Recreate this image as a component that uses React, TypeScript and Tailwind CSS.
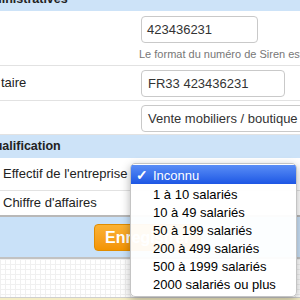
import React from 'react';

const options = [
  '1 à 10 salariés',
  '10 à 49 salariés',
  '50 à 199 salariés',
  '200 à 499 salariés',
  '500 à 1999 salariés',
  '2000 salariés ou plus',
];

const SectionHeader: React.FC<{ title: string; shift: string; className?: string }> = ({ title, shift, className }) => (
  <div className={`h-[23px] bg-[#cde3f8] flex items-center overflow-hidden ${className ?? ''}`}>
    <span className={`whitespace-nowrap text-[12.5px] font-bold text-[#222] ${shift}`}>{title}</span>
  </div>
);

const Dropdown: React.FC = () => (
  <div className="absolute left-[130px] top-[163px] w-[167px] h-[134px] bg-white/95 border border-[#c4c4c4] rounded-[5px] shadow-[0_3px_10px_rgba(0,0,0,0.3)] pt-px overflow-hidden text-[13px] text-black">
    <div className="h-[19px] flex items-center pt-[2px] leading-[17px] bg-gradient-to-b from-[#5a8df6] to-[#1d56e4] text-white">
      <span className="w-[22px] pl-[5px] text-[14px] font-bold">✓</span>
      <span>Inconnu</span>
    </div>
    <div className="pt-[2px]">
      {options.map((o) => (
        <div key={o} className="h-[18px] leading-[18px] pl-[22px] whitespace-nowrap">
          {o}
        </div>
      ))}
    </div>
  </div>
);

export default function App() {
  return (
    <div className="relative w-[300px] h-[300px] overflow-hidden bg-white font-['Liberation_Sans',Arial,sans-serif] text-[13px] text-[#222]">
      <SectionHeader title="administratives" shift="-ml-[24px]" className="-mt-[12px]" />

      <div className="h-[55px] border-b border-[#e2e2e2] flex">
        <div className="w-[141px] shrink-0" />
        <div className="pt-[5px]">
          <div className="w-[117px] h-[27px] border border-[#c9c9c9] rounded-[4px] flex items-center pl-[5px] text-[#333]">
            423436231
          </div>
          <div className="mt-[3px] -ml-[2px] text-[11px] text-[#777] whitespace-nowrap">
            Le format du numéro de Siren est
          </div>
        </div>
      </div>

      <div className="h-[35px] border-b border-[#e2e2e2] flex items-start">
        <div className="w-[141px] shrink-0 h-full flex items-center pl-px">taire</div>
        <div className="pt-[4px]">
          <div className="w-[144px] h-[27px] border border-[#c9c9c9] rounded-[4px] flex items-center pl-[6px] text-[#333] whitespace-nowrap">
            FR33 423436231
          </div>
        </div>
      </div>

      <div className="h-[34px] border-b border-[#e2e2e2] flex items-start">
        <div className="w-[141px] shrink-0" />
        <div className="pt-[4px]">
          <div className="w-[200px] h-[27px] border border-[#c9c9c9] rounded-[4px] flex items-center pl-[6px] text-[#333] whitespace-nowrap">
            Vente mobiliers / boutique
          </div>
        </div>
      </div>

      <SectionHeader title="Qualification" shift="-ml-[15px]" />

      <div className="h-[33px] border-b border-[#e2e2e2] flex items-center pl-[3px]">
        Effectif de l'entreprise
      </div>
      <div className="h-[24px] flex items-center pl-[3px]">Chiffre d'affaires</div>

      <div className="h-[2px] bg-[#b8b8b8]" />
      <div className="h-[40px] bg-[#c9e1f8] pl-[94px] pt-[7px]">
        <div className="inline-flex h-[27px] items-center px-[10px] rounded-[4px] border border-[#e08c00] bg-gradient-to-b from-[#fbb233] to-[#f39400] text-white text-[16px] font-bold">
          Enregistrer
        </div>
      </div>
      <div className="h-[2px] bg-[#c2c2c2]" />
      <div className="h-[38px] bg-white bg-[linear-gradient(#f0f0f0_1px,transparent_1px),linear-gradient(90deg,#f0f0f0_1px,transparent_1px)] bg-size-[5px_5px]" />
      <div className="h-px bg-[#cfcfcf]" />
      <div className="h-[4px] bg-[#f4edc4]" />

      <Dropdown />
    </div>
  );
}
